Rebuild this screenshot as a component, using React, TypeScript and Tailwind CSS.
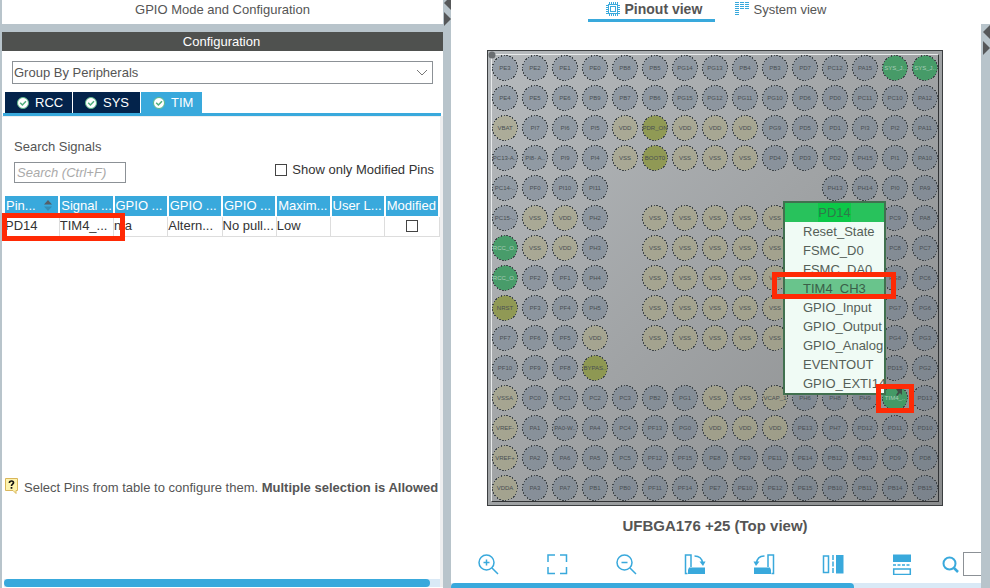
import type { ReactNode } from "react";

const PIN_ROWS: string[] = [
  "PE3|PE2|PE1|PE0|PB8|PB5|PG14|PG13|PB4|PB3|PD7|PC12|PA15|SYS_J..|SYS_J..",
  "PE4|PE5|PE6|PB9|PB7|PB6|PG15|PG12|PG11|PG10|PD6|PD0|PC11|PC10|PA12",
  "VBAT|PI7|PI6|PI5|VDD|PDR_ON|VDD|VDD|VDD|PG9|PD5|PD1|PI3|PI2|PA11",
  "PC13-A..|PI8- A..|PI9|PI4|VSS|BOOT0|VSS|VSS|VSS|PD4|PD3|PD2|PH15|PI1|PA10",
  "PC14-..|PF0|PI10|PI11||||||||PH13|PH14|PI0|PA9",
  "PC15-..|VSS|VDD|PH2||VSS|VSS|VSS|VSS|VSS||||PC9|PA8",
  "RCC_O..|VSS|VDD|PH3||VSS|VSS|VSS|VSS|VSS||||PC8|PC7",
  "RCC_O..|PF2|PF1|PH4||VSS|VSS|VSS|VSS|VSS||||PG8|PC6",
  "NRST|PF3|PF4|PH5||VSS|VSS|VSS|VSS|VSS||||PG7|PG6",
  "PF7|PF6|PF5|VDD||VSS|VSS|VSS|VSS|VSS||||PG4|PG3",
  "PF10|PF9|PF8|BYPAS..||||||||||PD15|PG2",
  "VSSA|PC0|PC1|PC2|PC3|PB2|PG1|VSS|VSS|VCAP_1|PH6|PH8|PH9|TIM4_..|PD13",
  "VREF-|PA1|PA0-W..|PA4|PC4|PF13|PG0|VDD|VDD|VDD|PE13|PH7|PD12|PD11|PD10",
  "VREF+|PA2|PA6|PA5|PC5|PF12|PF15|PE8|PE9|PE11|PE14|PB12|PB13|PD9|PD8",
  "VDDA|PA3|PA7|PB1|PB0|PF11|PF14|PE7|PE10|PE12|PE15|PB10|PB11|PB14|PB15",
];

const MENU = [
  "Reset_State",
  "FSMC_D0",
  "FSMC_DA0",
  "TIM4_CH3",
  "GPIO_Input",
  "GPIO_Output",
  "GPIO_Analog",
  "EVENTOUT",
  "GPIO_EXTI14",
];

function pinFill(name: string) {
  if (/^(SYS|RCC|TIM)/.test(name)) return "fill-[#38995fdd]";
  if (/^(PDR|BOOT|NRST|BYPAS)/.test(name)) return "fill-[#8a953fcc]";
  if (/^V/.test(name)) return "fill-[#a7a47a80]";
  return "fill-[#64768a66]";
}

function Pin({ name }: { name: string }) {
  if (!name) return <span />;
  const active = /^(SYS|RCC|TIM)/.test(name);
  return (
    <button className="grid size-[30px] place-items-center overflow-hidden">
      <svg viewBox="0 0 30 30" className="size-[30px] [grid-area:1/1]">
        <circle cx="15" cy="15" r="12.5" className={pinFill(name)} />
        <circle
          cx="15"
          cy="15"
          r="12.5"
          fill="none"
          stroke="#3f4549"
          strokeWidth="1"
          strokeDasharray="1.5 1.5"
          shapeRendering="crispEdges"
        />
      </svg>
      <span
        className={`text-[6px] leading-[8px] whitespace-nowrap [grid-area:1/1] ${active ? "text-[#a9cdb8]" : "text-[#484e52]"}`}
      >
        {name}
      </span>
    </button>
  );
}

function Arrow({ left = false }: { left?: boolean }) {
  return (
    <svg viewBox="0 0 7 14" className="h-[14px] w-[7px]" fill="#56585a">
      <path d={left ? "M7 0V14L0 7Z" : "M0 0V14L7 7Z"} />
    </svg>
  );
}

function Check() {
  return (
    <svg viewBox="0 0 12 12" className="size-3">
      <circle cx="6" cy="6" r="5.5" fill="#fff" stroke="#5cb88a" />
      <path d="M3.2 5.8L5.4 8L9 4.2" fill="none" stroke="#4fae7c" strokeWidth="1.5" />
    </svg>
  );
}

function PeripheralTab({ name, selected = false }: { name: string; selected?: boolean }) {
  return (
    <button
      className={`flex h-[21px] items-center gap-[6px] pl-3 text-white ${selected ? "w-[61px] bg-[#39a9dc]" : "w-[67px] bg-[#03234b]"}`}
    >
      <Check />
      {name}
    </button>
  );
}

function Tool({ label, children }: { label: string; children: ReactNode }) {
  return (
    <button aria-label={label} className="grid h-6 flex-1 place-items-center">
      <svg viewBox="0 0 22 22" className="size-[22px]" fill="none" stroke="#39a9dc" strokeWidth="1.5">
        {children}
      </svg>
    </button>
  );
}

const HEADS = ["Pin...", "Signal ...", "GPIO ...", "GPIO ...", "GPIO ...", "Maxim...", "User L...", "Modified"];
const CELLS = ["PD14", "TIM4_...", "n/a", "Altern...", "No pull...", "Low", ""];

function ConfigurationPanel() {
  return (
    <section className="flex min-w-0 flex-col">
      <h1 className="mb-2 h-6 bg-white text-center leading-[20px] text-[#555]">GPIO Mode and Configuration</h1>
      <h2 className="h-[19px] bg-[#4f514f] pr-[2px] text-center leading-[19px] text-white">Configuration</h2>
      <div className="flex min-h-0 flex-1 flex-col bg-white pt-[10px] pb-px">
        <div className="relative mr-[10px] ml-[10px] h-[23px]">
          <select
            aria-label="Grouping"
            className="block h-full w-full appearance-none border border-[#8c9196] bg-white px-px text-[#555]"
          >
            <option>Group By Peripherals</option>
          </select>
          <svg
            viewBox="0 0 12 8"
            className="pointer-events-none absolute top-2 right-[5px] h-2 w-3"
            fill="none"
            stroke="#777"
          >
            <path d="M1 1L6 6L11 1" />
          </svg>
        </div>
        <nav className="mt-2 mr-[2px] ml-px flex gap-px border-b-3 border-[#39a9dc] pl-[2px]">
          <PeripheralTab name="RCC" />
          <PeripheralTab name="SYS" />
          <PeripheralTab name="TIM" selected />
        </nav>
        <div className="flex min-h-0 flex-1 flex-col border-t border-r-3 border-[#eeeff0] pl-[2px]">
          <label htmlFor="signals" className="mt-[21px] ml-[10px] leading-[18px] text-[#555]">
            Search Signals
          </label>
          <div className="mt-[6px] flex items-start justify-between pr-[6px] pl-[10px]">
            <input
              id="signals"
              placeholder="Search (Ctrl+F)"
              className="h-[21px] w-28 border border-[#8c9196] px-[2px] italic placeholder:text-[#aaa]"
            />
            <label className="flex items-center gap-[5px] leading-4 text-[#333]">
              <input type="checkbox" className="size-3 appearance-none border border-[#444] bg-white" />
              Show only Modified Pins
            </label>
          </div>
          <div className="relative mt-[13px] pl-px">
            <table className="w-full table-fixed border-collapse">
              <thead>
                <tr className="h-5">
                  {HEADS.map((h, i) => (
                    <th
                      key={i}
                      className="overflow-hidden border-r-2 border-b border-white bg-[#39a9dc] p-0 pl-px text-left font-normal whitespace-nowrap text-white"
                    >
                      {i === 0 ? (
                        <span className="flex items-center justify-between pr-[6px]">
                          {h}
                          <svg viewBox="0 0 8 11" className="h-[11px] w-2">
                            <path d="M0 4.5L4 0L8 4.5Z" fill="#555f68" />
                            <path d="M0 6.5L4 11L8 6.5Z" fill="#358db5" />
                          </svg>
                        </span>
                      ) : (
                        h
                      )}
                    </th>
                  ))}
                </tr>
              </thead>
              <tbody>
                <tr className="h-5 border-b border-[#ddd] text-[#333]">
                  {CELLS.map((c, i) => (
                    <td key={i} className="overflow-hidden border-r border-[#ddd] p-0 whitespace-nowrap">
                      {c}
                    </td>
                  ))}
                  <td className="border-r border-[#ddd] p-0">
                    <input
                      type="checkbox"
                      aria-label="Modified"
                      className="mx-auto block size-3 appearance-none border border-[#444] bg-white"
                    />
                  </td>
                </tr>
              </tbody>
            </table>
            <div className="absolute top-[17px] -left-[2px] h-7 w-[123px] border-5 border-[#ff2a05]" />
          </div>
          <p className="mt-auto mb-[81px] flex items-center gap-[6px] overflow-hidden pl-px leading-[18px] whitespace-nowrap text-[#555]">
            <svg viewBox="0 0 13 16" className="mb-1 h-4 w-[13px] shrink-0">
              <path d="M.5 .5H12.500V12.500H11V15.500L8 12.500H.5Z" fill="#fdf3ae" stroke="#d9b65a" />
              <path
                d="M4.500 5V4.500C4.500 2.500 8.500 2.500 8.500 4.700C8.500 6.300 6.500 6 6.500 8M6.500 9V10.800"
                fill="none"
                stroke="#111"
                strokeWidth="1.700"
              />
            </svg>
            <span>
              Select Pins from table to configure them. <b>Multiple selection is Allowed</b>
            </span>
          </p>
          <div className="h-2 bg-[#d9e9f6] pr-[10px]">
            <div className="h-2 rounded-full bg-[#39a9dc]" />
          </div>
        </div>
      </div>
    </section>
  );
}

function Chip() {
  return (
    <div className="relative mx-auto mt-7 border border-[#3c3f41] bg-linear-135 from-[#b6babd] to-[#8a8c8d] p-[2px]">
      <div className="absolute inset-[3px] border border-t-[#e9ebec] border-r-[#303234] border-b-[#303234] border-l-[#e9ebec]" />
      <svg viewBox="0 0 8 8" className="absolute top-0 left-0 size-2">
        <circle cx="4" cy="4" r="3.500" fill="#6a6e71" />
      </svg>
      <div className="relative grid auto-rows-[30px] grid-cols-[repeat(15,30px)]">
        {PIN_ROWS.flatMap((row, r) => row.split("|").map((name, c) => <Pin key={`${r}-${c}`} name={name} />))}
      </div>
      <ul className="absolute top-[150px] left-[295px] w-[103px] border-2 border-[#41714f] text-[#555f58]">
        <li className="h-[19px] bg-[#28c25c] text-center leading-[19px] text-[#2f7a4a]">
          <span className="inline-block h-[19px] bg-[#0cc848]">PD14</span>
        </li>
        {MENU.map((m) => (
          <li key={m} className={m === "TIM4_CH3" ? "bg-[#69c48c] text-[#3a5f48]" : "bg-[#f0fbf5]"}>
            <button className="block h-[19px] pl-[18px] text-left leading-[19px]">{m}</button>
          </li>
        ))}
      </ul>
      <svg viewBox="0 0 8 8" className="absolute top-[338px] left-[407px] size-2" fill="#3f4b45">
        <path d="M1 0H7V6L5 4L2 7L1 6L3 3Z" />
      </svg>
      <div className="absolute top-[221px] left-[284px] h-[27px] w-[124px] border-5 border-[#ff2a05]" />
      <div className="absolute top-[333px] left-[388px] h-[29px] w-[38px] border-5 border-[#ff2a05]" />
    </div>
  );
}

function PinoutPanel() {
  return (
    <section className="flex min-w-0 flex-col overflow-hidden bg-white">
      <div className="flex h-[22px] justify-center">
        <button className="flex w-[127px] items-start gap-[5px] border-b-3 border-[#39a9dc] pt-[2px] pl-[18px] text-[14px] leading-[15px] font-bold text-[#555]">
          <svg viewBox="0 0 14 14" className="size-[14px]" fill="none" stroke="#39a9dc">
            <rect x="2.500" y="2.500" width="9" height="9" />
            <rect x="4.500" y="4.500" width="5" height="5" />
            <path d="M3.500 0V2M5.500 0V2M7.500 0V2M9.500 0V2M11.500 0V2M3.500 12V14M5.500 12V14M7.500 12V14M9.500 12V14M11.500 12V14M0 3.500H2M0 5.500H2M0 7.500H2M0 9.500H2M0 11.500H2M12 3.500H14M12 5.500H14M12 7.500H14M12 9.500H14M12 11.500H14" />
          </svg>
          Pinout view
        </button>
        <button className="flex w-[130px] items-start gap-[5px] pt-[2px] pl-5 leading-[15px] text-[#555]">
          <svg viewBox="0 0 14 14" className="size-[14px]" fill="none" stroke="#39a9dc">
            <path d="M0 .5H4M5 .5H9M10 .5H14M0 2.500H4M5 2.500H9M10 2.500H14M0 4.500H4M5 4.500H9M10 4.500H14M0 6.500H4M5 6.500H9M10 6.500H14M0 8.500H4M0 10.500H4M0 12.500H4" />
          </svg>
          System view
        </button>
      </div>
      <div className="flex pr-[2px]">
        <Chip />
      </div>
      <p className="mt-[11px] pr-[2px] text-center text-[15px] leading-[18px] font-bold text-[#555]">
        UFBGA176 +25 (Top view)
      </p>
      <div className="mt-auto mb-[7px] flex items-center pl-[2px]">
        <Tool label="Zoom in">
          <circle cx="9.500" cy="9.500" r="7.500" />
          <path d="M15 15L21 21M6.500 9.500H12.500M9.500 6.500V12.500" />
        </Tool>
        <Tool label="Best fit">
          <path d="M2 9V2H9M14 2H20.500V9M20.500 14V20.500H14M9 20.500H2V14" />
        </Tool>
        <Tool label="Zoom out">
          <circle cx="9.500" cy="9.500" r="7.500" />
          <path d="M15 15L21 21M6.500 9.500H12.500" />
        </Tool>
        <Tool label="Rotate clockwise">
          <path d="M3.500 20.500H1.500V2H7V14" />
          <path d="M5 14.500H21V21H4V17Z" fill="#39a9dc" stroke="none" />
          <path d="M10.500 3C15 3 18 5.500 18.500 10" />
          <path d="M15.500 8.500H21.500L19 13Z" fill="#39a9dc" stroke="none" />
        </Tool>
        <Tool label="Rotate counterclockwise">
          <path d="M18.500 20.500H20.500V2H15V14" />
          <path d="M17 14.500H1V21H18V17Z" fill="#39a9dc" stroke="none" />
          <path d="M11.500 3C7 3 4 5.500 3.500 10" />
          <path d="M.5 8.500H6.500L3 13Z" fill="#39a9dc" stroke="none" />
        </Tool>
        <Tool label="Flip horizontally">
          <path d="M1.500 3H6.500V19.500H1.500Z" />
          <path d="M11 2V21" strokeDasharray="5 1.500" />
          <path d="M14 2H21.500V20.500H14Z" fill="#39a9dc" stroke="none" />
        </Tool>
        <Tool label="Flip vertically">
          <path d="M2 1.500H20V9H2Z" fill="#39a9dc" stroke="none" />
          <path d="M2 12H20" strokeDasharray="3 1.500" />
          <path d="M2.700 16H19.300V21.500H2.700Z" />
        </Tool>
        <label htmlFor="find-pin" className="mx-1 ml-[6px]">
          <svg
            viewBox="0 0 17 17"
            className="size-[17px]"
            fill="none"
            stroke="#39a9dc"
            strokeWidth="2"
            role="img"
            aria-label="Find pin"
          >
            <circle cx="7.500" cy="7.500" r="6" />
            <path d="M12 12L16 16" strokeWidth="2.500" />
          </svg>
        </label>
        <input id="find-pin" className="h-6 w-[18px] border border-r-0 border-[#8c9196]" />
      </div>
      <div className="h-[5px] shrink-0 bg-[#d9e9f6]">
        <div className="h-[5px] w-[76%] rounded-t-[4px] bg-[#39a9dc]" />
      </div>
    </section>
  );
}

export default function App() {
  return (
    <main className="grid h-screen grid-cols-[441fr_8px_530fr_9px] overflow-hidden bg-[#b8c4cb] pl-[2px] font-['Liberation_Sans',Arial,sans-serif] text-[13px] leading-[18px]">
      <ConfigurationPanel />
      <div className="-mt-1 flex flex-col items-end gap-[2px]">
        <Arrow left />
        <Arrow />
      </div>
      <PinoutPanel />
      <div>
        <div className="h-6 bg-white" />
        <div className="flex flex-col items-end gap-[2px] pt-px">
          <Arrow left />
          <Arrow />
        </div>
      </div>
    </main>
  );
}
